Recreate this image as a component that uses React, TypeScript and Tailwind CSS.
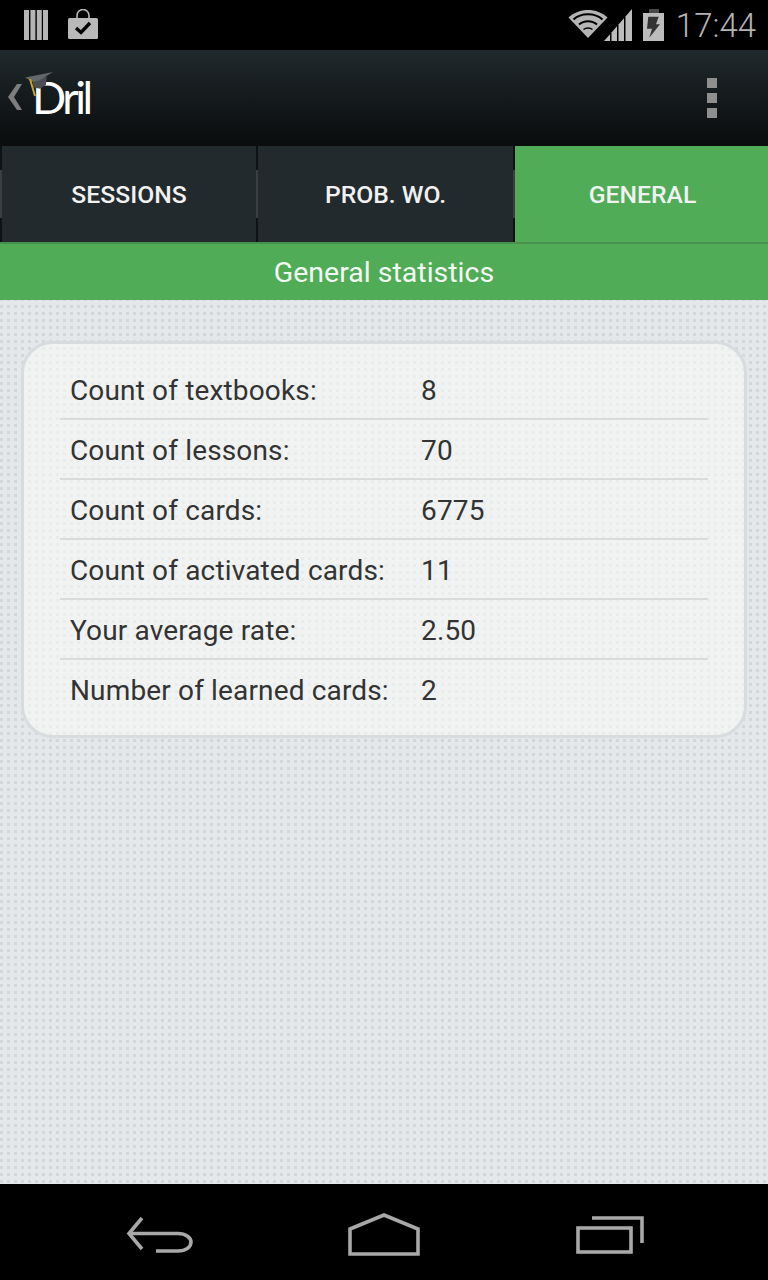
const rows = [
  ['Count of textbooks:', '8'],
  ['Count of lessons:', '70'],
  ['Count of cards:', '6775'],
  ['Count of activated cards:', '11'],
  ['Your average rate:', '2.50'],
  ['Number of learned cards:', '2'],
];

function TabDivider() {
  return (
    <div className="flex h-full w-[2px] shrink-0 items-center bg-[#0e1213]">
      <div className="h-[48px] w-full bg-[#3a3f41]" />
    </div>
  );
}

function StatusBar() {
  return (
    <div className="flex h-[50px] items-center justify-between bg-black pr-[12px] pl-[24px]">
      <div className="flex items-center gap-[19px]">
        <svg width="24" height="30" viewBox="0 0 24 30" fill="#b5b5b5">
          <rect x="0" y="0" width="5" height="30" />
          <rect x="6.4" y="0" width="5" height="30" />
          <rect x="12.8" y="0" width="5" height="30" />
          <rect x="19" y="0" width="5" height="30" />
        </svg>
        <svg width="32" height="32" viewBox="0 0 32 32">
          <path d="M10 9V6.5a6 6 0 0 1 12 0V9" fill="none" stroke="#b5b5b5" strokeWidth="1.6" />
          <rect x="1" y="9" width="30" height="21" rx="1.5" fill="#b9b9b9" />
          <path d="M9 19l5 4.5L23 14" fill="none" stroke="#000" strokeWidth="3.4" />
        </svg>
      </div>
      <div className="flex items-center">
        <svg width="40" height="30" viewBox="0 0 40 30" className="mt-[-2px]">
          <path d="M0.5 8.5C11-1.5 29-1.5 39.5 8.5L20 29Z" fill="#b5b5b5" />
          <path d="M5.5 10.5C13 3.5 27 3.5 34.5 10.5" fill="none" stroke="#000" strokeWidth="2" />
          <path d="M11 15.5C16 11 24 11 29 15.5" fill="none" stroke="#000" strokeWidth="2" />
          <path d="M15.5 20.5C18 18.5 22 18.5 24.5 20.5" fill="none" stroke="#000" strokeWidth="1.6" />
        </svg>
        <svg width="28" height="32" viewBox="0 0 28 32" className="ml-[-4px]" fill="#bdbdbd">
          <path d="M0 32L6 25.2V32Z" />
          <path d="M7.5 23.5L13 17.2V32H7.5Z" />
          <path d="M14.5 15.5L20 9.2V32H14.5Z" />
          <path d="M21.5 7.5L28 0V32H21.5Z" />
        </svg>
        <svg width="21" height="32" viewBox="0 0 21 32" className="ml-[11px]">
          <rect x="6" y="0" width="10" height="4" fill="#4a4a4a" />
          <rect x="0" y="4" width="21" height="28" fill="#bcbcbc" />
          <path d="M5.3 7.7H15.7L13 15.3H17L6.3 28.7L9 19.7H4Z" fill="#333333" />
        </svg>
        <span className="ml-[12px] font-['Roboto',sans-serif] text-[33px] leading-none font-light text-[#b4b4b4]">17:44</span>
      </div>
    </div>
  );
}

function ActionBar() {
  return (
    <div className="relative flex h-[96px] items-center justify-between bg-gradient-to-b from-[#20292c] to-[#0a0c0d] pr-[51px] pl-[8px]">
      <div className="flex items-center">
        <svg width="14" height="28" viewBox="0 0 14 28" className="mt-[-2px]">
          <path d="M9 1H14L6 14L14 27H9L0 14Z" fill="#7d7d7d" />
        </svg>
        <div className="relative ml-[10px] mt-[-1px]">
          <span className="block font-['Lato',sans-serif] text-[45px] leading-none tracking-[-3.5px] text-white">Dril</span>
          <svg width="28" height="26" viewBox="0 0 28 26" className="absolute top-[-3px] left-[-7px]">
            <path d="M7.7 7.7L21.7 4.3L21 12.7L15 16.7L8.3 15.3Z" fill="#4a4e50" />
            <path d="M0 5.5L28 0L14 8.5L8 10Z" fill="#63686a" />
            <path d="M5 7L10 24" stroke="#c9a227" strokeWidth="2" fill="none" />
          </svg>
        </div>
      </div>
      <div className="flex flex-col gap-[5px]">
        <div className="size-[10px] bg-[#8f8f8f]" />
        <div className="size-[10px] bg-[#8f8f8f]" />
        <div className="size-[10px] bg-[#8f8f8f]" />
      </div>
    </div>
  );
}

function Tabs() {
  return (
    <div className="flex h-[96px] bg-[#222a2d] font-['Roboto',sans-serif] text-[24.7px] font-medium text-[#f1f1f1]">
      <TabDivider />
      <div className="flex w-[254px] items-center justify-center pt-[1px]">SESSIONS</div>
      <TabDivider />
      <div className="flex w-[255px] items-center justify-center pt-[1px]">PROB. WO.</div>
      <TabDivider />
      <div className="flex w-[253px] items-center justify-center bg-[#50ac56] pt-[1px] pl-[2px]">GENERAL</div>
    </div>
  );
}

export default function App() {
  return (
    <div className="flex h-[1280px] w-[768px] flex-col overflow-hidden bg-black font-['Roboto',sans-serif]">
      <StatusBar />
      <ActionBar />
      <Tabs />
      <div className="flex h-[58px] items-center justify-center border-t-2 border-[#47904d] bg-[#50ac56] pt-[2px] text-[28.5px] text-[#f4f8f4]">
        General statistics
      </div>
      <div className="flex-1 bg-[#e5e8eb] bg-[conic-gradient(at_3px_3px,transparent_75%,#d4d7da_0)] bg-[length:7px_7px] bg-[position:0_5px] px-[21px] pt-[41px]">
        <div className="rounded-[32px] border-[3px] border-[#d9dcdf] bg-[#f9faf7]/60 px-[36px] pt-[16px] pb-[15px]">
          {rows.map(([label, value], i) => (
            <div
              key={label}
              className={`flex h-[60px] items-center border-b-2 pl-[10px] pt-[3px] text-[28px] tracking-[0.15px] text-[#333333] ${
                i < rows.length - 1 ? 'border-[#d8dbda]' : 'border-transparent'
              }`}
            >
              <span className="w-[351px]">{label}</span>
              <span>{value}</span>
            </div>
          ))}
        </div>
      </div>
      <div className="flex h-[96px] items-center gap-[154px] bg-black pt-[6px] pl-[126px]">
        <svg width="68" height="40" viewBox="0 0 68 40" fill="none" stroke="#a8a8a8" strokeWidth="3.6">
          <path d="M16 3L3 18.5L16 34" />
          <path d="M3 18.5H52C60 18.5 65 23 65 27C65 32 60 36 52 36H30" />
        </svg>
        <svg width="72" height="44" viewBox="0 0 72 44" fill="none" stroke="#a8a8a8" strokeWidth="3.6">
          <path d="M2 16L36 2L70 16V41H2Z" />
        </svg>
        <svg width="70" height="38" viewBox="0 0 70 38" fill="none" stroke="#a8a8a8" strokeWidth="3.6" className="ml-[2px]">
          <rect x="2" y="12" width="53" height="24" />
          <path d="M16 2H66V27" />
        </svg>
      </div>
    </div>
  );
}
